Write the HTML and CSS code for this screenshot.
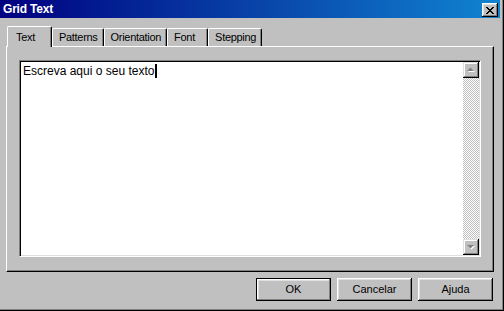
FILE: index.html
```html
<!DOCTYPE html>
<html lang="en">
<head>
    <meta charset="UTF-8">
    <title>Grid Text</title>
    <link rel="stylesheet" href="styles.css">
</head>
<body>
    <div class="window">
        <div class="titlebar">
            <span class="title">Grid Text</span>
            <div class="close-btn">
                <svg width="8" height="7" viewBox="0 0 8 7">
                    <path d="M0 0h2v1h1v1h2v-1h1v-1h2v1h-1v1h-1v1h-1v1h1v1h1v1h1v1h-2v-1h-1v-1h-2v1h-1v1h-2v-1h1v-1h1v-1h1v-1h-1v-1h-1v-1h-1z" fill="#000"/>
                </svg>
            </div>
        </div>

        <div class="content">
            <div class="tabs">
                <div class="tab active">Text</div>
                <div class="tab">Patterns</div>
                <div class="tab">Orientation</div>
                <div class="tab">Font</div>
                <div class="tab">Stepping</div>
            </div>

            <div class="panel">
                <div class="editor">
                    <div class="editor-text">Escreva aqui o seu texto<span class="caret"></span></div>
                    <div class="scrollbar">
                        <div class="scroll-btn">
                            <svg width="14" height="14" viewBox="0 0 14 14">
                                <polygon points="4,9 11,9 7.5,5.5" fill="#fff"/>
                                <polygon points="3,8 10,8 6.5,4.5" fill="#808080"/>
                            </svg>
                        </div>
                        <div class="track"></div>
                        <div class="scroll-btn">
                            <svg width="14" height="14" viewBox="0 0 14 14">
                                <polygon points="4,6 11,6 7.5,9.5" fill="#fff"/>
                                <polygon points="3,5 10,5 6.5,8.5" fill="#808080"/>
                            </svg>
                        </div>
                    </div>
                </div>
            </div>

            <div class="buttons">
                <div class="btn default">OK</div>
                <div class="btn">Cancelar</div>
                <div class="btn">Ajuda</div>
            </div>
        </div>
    </div>
</body>
</html>
```

FILE: styles.css
```css
body {
    margin: 0;
    font-family: "Liberation Sans", Arial, sans-serif;
    font-size: 11px;
    color: #000;
    background: #c0c0c0;
}

.window {
    width: 504px;
    height: 311px;
    box-sizing: border-box;
    padding: 0 4px 3px 0;
    background: #c0c0c0;
    box-shadow: inset -1px -1px #000, inset -2px -2px #808080;
    display: flex;
    flex-direction: column;
}

.titlebar {
    height: 18px;
    padding: 0 2px 0 3px;
    background: linear-gradient(to right, #000080, #1084d0);
    display: flex;
    align-items: center;
    justify-content: space-between;
}

.title {
    color: #fff;
    font-weight: bold;
    font-size: 12px;
    letter-spacing: -0.2px;
}

.close-btn {
    width: 16px;
    height: 14px;
    box-sizing: border-box;
    margin-top: 2px;
    background: #c0c0c0;
    box-shadow: inset -1px -1px #000, inset 1px 1px #fff, inset -2px -2px #808080, inset 2px 2px #dfdfdf;
    display: flex;
    align-items: center;
    justify-content: center;
}

.content {
    flex: 1;
    padding: 8px 6px 0 6px;
    display: flex;
    flex-direction: column;
}

.tabs {
    height: 20px;
    padding-left: 1px;
    display: flex;
    align-items: flex-end;
}

.tab {
    height: 18px;
    min-width: 41px;
    box-sizing: border-box;
    padding: 2px 5px 0 6px;
    line-height: 13px;
    letter-spacing: -0.3px;
    border-top: 1px solid #fff;
    border-left: 1px solid #fff;
    border-right: 1px solid #000;
    border-radius: 2px 2px 0 0;
    box-shadow: inset -1px 0 #808080;
    background: #c0c0c0;
}

.tab.active {
    height: 21px;
    min-width: 45px;
    margin-bottom: -1px;
    padding: 4px 5px 0 8px;
    position: relative;
    z-index: 1;
}

.panel {
    height: 226px;
    box-sizing: border-box;
    padding: 13px 12px 13px 12px;
    border-top: 1px solid #fff;
    border-left: 1px solid #fff;
    border-right: 1px solid #000;
    border-bottom: 1px solid #000;
    box-shadow: inset -1px -1px #808080;
}

.editor {
    height: 197px;
    box-sizing: border-box;
    padding: 1px;
    border: 1px solid;
    border-color: #808080 #fff #fff #808080;
    box-shadow: inset 1px 1px #000, inset -1px -1px #dfdfdf;
    background: #fff;
    display: flex;
}

.editor-text {
    flex: 1;
    padding: 2px 2px 0 2px;
    font-size: 12px;
    line-height: 14px;
}

.caret {
    display: inline-block;
    width: 2px;
    height: 14px;
    margin-left: 1px;
    vertical-align: -3px;
    background: #000;
}

.scrollbar {
    width: 16px;
    display: flex;
    flex-direction: column;
}

.scroll-btn {
    height: 16px;
    box-sizing: border-box;
    padding: 1px;
    background: #c0c0c0;
    box-shadow: inset -1px -1px #000, inset 1px 1px #dfdfdf, inset -2px -2px #808080, inset 2px 2px #fff;
}

.scroll-btn svg {
    display: block;
}

.track {
    flex: 1;
    background: repeating-conic-gradient(#c0c0c0 0 25%, #fff 0 50%) 0 0 / 2px 2px;
}

.buttons {
    margin-top: 6px;
    margin-right: 1px;
    display: flex;
    justify-content: flex-end;
    gap: 6px;
}

.btn {
    width: 75px;
    height: 23px;
    box-sizing: border-box;
    line-height: 23px;
    text-align: center;
    background: #c0c0c0;
    box-shadow: inset -1px -1px #000, inset 1px 1px #fff, inset -2px -2px #808080, inset 2px 2px #dfdfdf;
}

.btn.default {
    line-height: 21px;
    border: 1px solid #000;
    box-shadow: inset -1px -1px #808080, inset 1px 1px #fff, inset 2px 2px #dfdfdf;
}
```
